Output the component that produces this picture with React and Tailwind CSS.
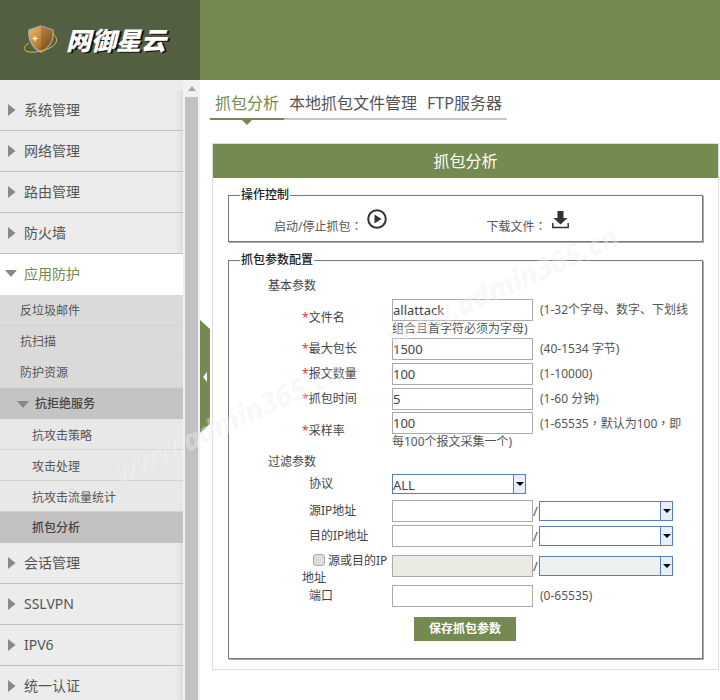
import React from 'react'

const font = { fontFamily: '"Noto Sans", "Noto Sans CJK SC", sans-serif' }

function RightArrow() {
  return (
    <svg width="8" height="12" viewBox="0 0 8 12" className="shrink-0">
      <path d="M0 0L7.5 6L0 12Z" fill="#888" />
    </svg>
  )
}

function DownArrow() {
  return (
    <svg width="12" height="7" viewBox="0 0 12 7" className="shrink-0">
      <path d="M0 0H12L6 7Z" fill="#888" />
    </svg>
  )
}

function MenuRow({ label }) {
  return (
    <div className="flex h-[41px] items-center border-b border-[#bfbfbf] bg-[linear-gradient(to_left,#dcdedd,#ececec_8px)] pb-[1px] pl-[8px] text-[14px] text-[#555]">
      <RightArrow />
      <span className="ml-[8px]">{label}</span>
    </div>
  )
}

function SubRow({ label, className }) {
  return (
    <div className={`flex h-[31px] items-center border-b border-[#d4d4d4] text-[12px] text-[#555] ${className}`}>
      {label}
    </div>
  )
}

function Sidebar() {
  return (
    <aside className="flex w-[200px] shrink-0">
      <nav className="w-[183px] bg-[#ececec] pt-[10px]">
        <MenuRow label="系统管理" />
        <MenuRow label="网络管理" />
        <MenuRow label="路由管理" />
        <MenuRow label="防火墙" />
        <div className="flex h-[41px] items-center bg-white pb-[3px] pl-[5px] text-[14px] text-[#74894f]">
          <DownArrow />
          <span className="ml-[7px]">应用防护</span>
        </div>
        <SubRow label="反垃圾邮件" className="bg-[#dadada] pl-[20px] pt-[2px]" />
        <SubRow label="抗扫描" className="bg-[#dadada] pl-[20px] pt-[2px]" />
        <SubRow label="防护资源" className="bg-[#dadada] pl-[20px] pt-[2px]" />
        <div className="flex h-[31px] items-center bg-[#c4c4c4] pl-[17px] pt-[1px] text-[12px] font-medium text-[#444]">
          <DownArrow />
          <span className="ml-[6px]">抗拒绝服务</span>
        </div>
        <SubRow label="抗攻击策略" className="bg-[#e8e8e8] pl-[32px] pt-[3px]" />
        <SubRow label="攻击处理" className="bg-[#e8e8e8] pl-[32px] pt-[3px]" />
        <SubRow label="抗攻击流量统计" className="bg-[#e8e8e8] pl-[32px] pt-[3px]" />
        <div className="flex h-[31px] items-center bg-[#c2c0c0] pl-[32px] text-[12px] font-medium text-[#444]">
          抓包分析
        </div>
        <MenuRow label="会话管理" />
        <MenuRow label="SSLVPN" />
        <MenuRow label="IPV6" />
        <MenuRow label="统一认证" />
      </nav>
      <div className="flex w-[17px] flex-col bg-[#f1f1f1] px-[2px]">
        <div className="flex h-[17px] items-center justify-center">
          <svg width="8" height="5" viewBox="0 0 8 5">
            <path d="M0 5L4 0L8 5Z" fill="#a8a8a8" />
          </svg>
        </div>
        <div className="flex-1 bg-[#c1c1c1]" />
      </div>
    </aside>
  )
}

function Field({ value, disabled }) {
  return (
    <input
      readOnly
      value={value || ''}
      className={`h-[22px] w-[141px] border border-[#aaa] text-[13px] text-[#444] outline-none ${disabled ? 'bg-[#ebebe4]' : 'bg-white'}`}
    />
  )
}

function FakeSelect({ value, disabled }) {
  return (
    <div className={`flex h-[20px] w-[134px] border border-[#5b7db1] text-[13px] leading-[20px] text-[#444] ${disabled ? 'bg-[#eef0f0]' : 'bg-white'}`}>
      <span className="flex-1">{value}</span>
      <span className="flex w-[12px] items-center justify-center border-l border-[#5b7db1] bg-[#e6effc]">
        <svg width="8" height="4" viewBox="0 0 8 4">
          <path d="M0 0H8L4 4Z" fill="#000" />
        </svg>
      </span>
    </div>
  )
}

function ParamRow({ label, value, hint, className = 'mt-[3px]' }) {
  return (
    <div className={`flex items-center ${className}`}>
      <div className="w-[90px] text-[12px] text-[#444]">
        <span className="text-[#e33]">*</span>{label}
      </div>
      <div>
        <div className="flex items-center">
          <Field value={value} />
          {hint && <span className="ml-[7px] whitespace-nowrap text-[12px] text-[#555]">{hint[0]}</span>}
        </div>
        {hint && hint[1] && <div className="h-[16px] whitespace-nowrap text-[12px] leading-[16px] text-[#555]">{hint[1]}</div>}
      </div>
    </div>
  )
}

function IpRow({ label, className }) {
  return (
    <div className={`flex items-center ${className}`}>
      <div className="w-[90px] pl-[7px] text-[12px] text-[#444]">{label}</div>
      <Field />
      <span className="w-[6px] text-[13px] leading-[22px] text-[#555]">/</span>
      <FakeSelect />
    </div>
  )
}

function CapturePanel() {
  const sampleHint = (
    <>
      (1-65535<span className="font-['Noto_Sans_CJK_TC']">，</span>默认为100<span className="font-['Noto_Sans_CJK_TC']">，</span>即
    </>
  )

  return (
    <section className="ml-[2px] mr-[1px] mt-[23px] h-[527px] border border-[#ddd] bg-white">
      <h2 className="flex h-[34px] items-center justify-center bg-[#748a50] text-[16px] font-normal text-white">抓包分析</h2>
      <div className="px-[15px]">
        <fieldset className="mt-[9px] h-[55px] border border-[#777] pl-[11px] shadow-[1px_1px_0_#aaa]">
          <legend className="px-[1px] text-[12px] font-medium leading-[16px] text-[#222]">操作控制</legend>
          <div className="flex h-[31px] items-start text-[12px] text-[#555]">
            <span className="ml-[34px] mt-[14px]">启动/停止抓包<span className="font-['Noto_Sans_CJK_TC']">：</span></span>
            <svg width="20" height="20" viewBox="0 0 20 20" className="ml-[5px] mt-[6px]">
              <circle cx="10" cy="10" r="8.8" fill="#fff" stroke="#333" strokeWidth="2" />
              <path d="M7.5 5.5L14.5 10L7.5 14.5Z" fill="#333" />
            </svg>
            <span className="ml-[99px] mt-[14px]">下载文件<span className="font-['Noto_Sans_CJK_TC']">：</span></span>
            <svg width="17" height="18" viewBox="0 0 17 18" className="ml-[5px] mt-[8px]">
              <path d="M5.5 0H11.5V7H15.5L8.5 13.5L1.5 7H5.5Z" fill="#333" />
              <path d="M0.8 12V16.6H16.2V12" fill="none" stroke="#333" strokeWidth="1.5" />
            </svg>
          </div>
        </fieldset>
        <fieldset className="mt-[10px] h-[407px] border border-[#777] pl-[39px] shadow-[1px_1px_0_#aaa]">
          <legend className="ml-[-28px] px-[1px] text-[12px] font-medium leading-[16px] text-[#222]">抓包参数配置</legend>
          <div className="mt-[10px] h-[16px] text-[12px] leading-[16px] text-[#444]">基本参数</div>
          <div className="ml-[34px]">
            <ParamRow label="文件名" value="allattack" hint={['(1-32个字母、数字、下划线', '组合且首字符必须为字母)']} className="mt-[5px]" />
            <ParamRow label="最大包长" value="1500" hint={['(40-1534 字节)']} className="mt-[1px]" />
            <ParamRow label="报文数量" value="100" hint={['(1-10000)']} />
            <ParamRow label="抓包时间" value="5" hint={['(1-60 分钟)']} />
            <ParamRow label="采样率" value="100" hint={[sampleHint, '每100个报文采集一个)']} className="mt-[2px]" />
          </div>
          <div className="mt-[4px] h-[16px] text-[12px] leading-[16px] text-[#444]">过滤参数</div>
          <div className="ml-[34px]">
            <div className="mt-[4px] flex items-center">
              <div className="w-[90px] pl-[7px] text-[12px] text-[#444]">协议</div>
              <FakeSelect value="ALL" />
            </div>
            <IpRow label="源IP地址" className="mt-[6px]" />
            <IpRow label="目的IP地址" className="mt-[3px]" />
            <div className="mt-[8px] flex h-[22px] items-center">
              <div className="mt-[5px] w-[90px] whitespace-nowrap text-[12px] leading-[17px] text-[#444]">
                <input type="checkbox" readOnly className="mb-[-1px] ml-[11px] mr-[3px] inline-block h-[12px] w-[12px] appearance-none rounded-[3px] border border-[#aaa] bg-[#dcdcdc]" />
                源或目的IP<br />地址
              </div>
              <Field disabled />
              <span className="w-[6px] text-[13px] leading-[22px] text-[#555]">/</span>
              <FakeSelect disabled />
            </div>
            <div className="mt-[8px] flex items-center">
              <div className="w-[90px] pl-[7px] text-[12px] text-[#444]">端口</div>
              <Field />
              <span className="ml-[7px] text-[12px] text-[#555]">(0-65535)</span>
            </div>
            <button className="ml-[112px] mt-[10px] block h-[24px] w-[102px] bg-[#748a50] text-[12px] font-bold text-white">保存抓包参数</button>
          </div>
        </fieldset>
      </div>
    </section>
  )
}

export default function App() {
  return (
    <div className="relative h-[700px] w-[720px] overflow-hidden bg-white" style={font}>
      <header className="flex h-[80px]">
        <div className="flex w-[200px] items-center bg-[#535f41] pl-[23px]">
          <svg width="36" height="30" viewBox="0 0 36 30" className="mt-[-1px] shrink-0">
            <defs>
              <linearGradient id="shield" x1="0" y1="0" x2="1" y2="1">
                <stop offset="0" stopColor="#eebd6e" />
                <stop offset="0.55" stopColor="#b97d35" />
                <stop offset="1" stopColor="#6f4118" />
              </linearGradient>
            </defs>
            <path d="M6 5L18 1L30 5C31 14 27 23 18 27C9 23 5 14 6 5Z" fill="url(#shield)" stroke="#a9a99d" strokeWidth="1.5" />
            <path d="M18 1V27C27 23 31 14 30 5Z" fill="#5b3514" fillOpacity="0.25" />
            <path d="M12 10l1 2.5l2.5 1l-2.5 1l-1 2.5l-1-2.5l-2.5-1l2.5-1Z" fill="#ffe9a8" />
            <path d="M29 9C35 12 35 17 30 21C23 26 8 29 3 26C0 24 1 21 6 18" fill="none" stroke="#d9b84a" strokeWidth="1" />
          </svg>
          <span className="ml-[7px] text-[25px] font-black italic leading-none text-white [text-shadow:2px_1px_0_#111]">网御星云</span>
        </div>
        <div className="flex-1 bg-[#748a50]" />
      </header>
      <div className="flex h-[620px]">
        <Sidebar />
        <main className="min-w-0 flex-1 pl-[10px] pt-[8px]">
          <div className="relative flex w-[297px] border-b-2 border-[#c8c6c6] text-[16px]">
            <div className="relative mb-[-2px] flex h-[32px] items-center border-b-2 border-[#748a50] px-[5px] text-[#74894f]">
              抓包分析
              <span className="absolute left-[32px] top-[32px] h-0 w-0 border-x-[5px] border-t-[5px] border-x-transparent border-t-[#748a50]" />
            </div>
            <div className="flex h-[30px] items-center px-[5px] text-[#555]">本地抓包文件管理</div>
            <div className="flex h-[30px] items-center px-[5px] text-[#555]">FTP服务器</div>
          </div>
          <CapturePanel />
        </main>
      </div>

      {/* collapse handle */}
      <div className="absolute left-[200px] top-[320px] flex h-[113px] w-[10px] items-center justify-center bg-[#748a50] [clip-path:polygon(0_0,100%_9px,100%_104px,0_100%)]">
        <span className="h-0 w-0 border-y-[5px] border-r-[4px] border-y-transparent border-r-white" />
      </div>

      {/* watermark */}
      <div className="pointer-events-none absolute left-[102px] top-[404px] w-[245px] -rotate-[24.5deg] whitespace-nowrap text-[29px] font-bold italic leading-[36px] text-[rgba(205,205,205,0.14)] [text-shadow:1px_1px_0_rgba(255,255,255,0.35)]">www.admin365.cn</div>
      <div className="pointer-events-none absolute left-[377px] top-[269px] w-[245px] -rotate-[24.5deg] whitespace-nowrap text-[29px] font-bold italic leading-[36px] text-[rgba(205,205,205,0.14)] [text-shadow:1px_1px_0_rgba(255,255,255,0.35)]">www.admin365.cn</div>
    </div>
  )
}
